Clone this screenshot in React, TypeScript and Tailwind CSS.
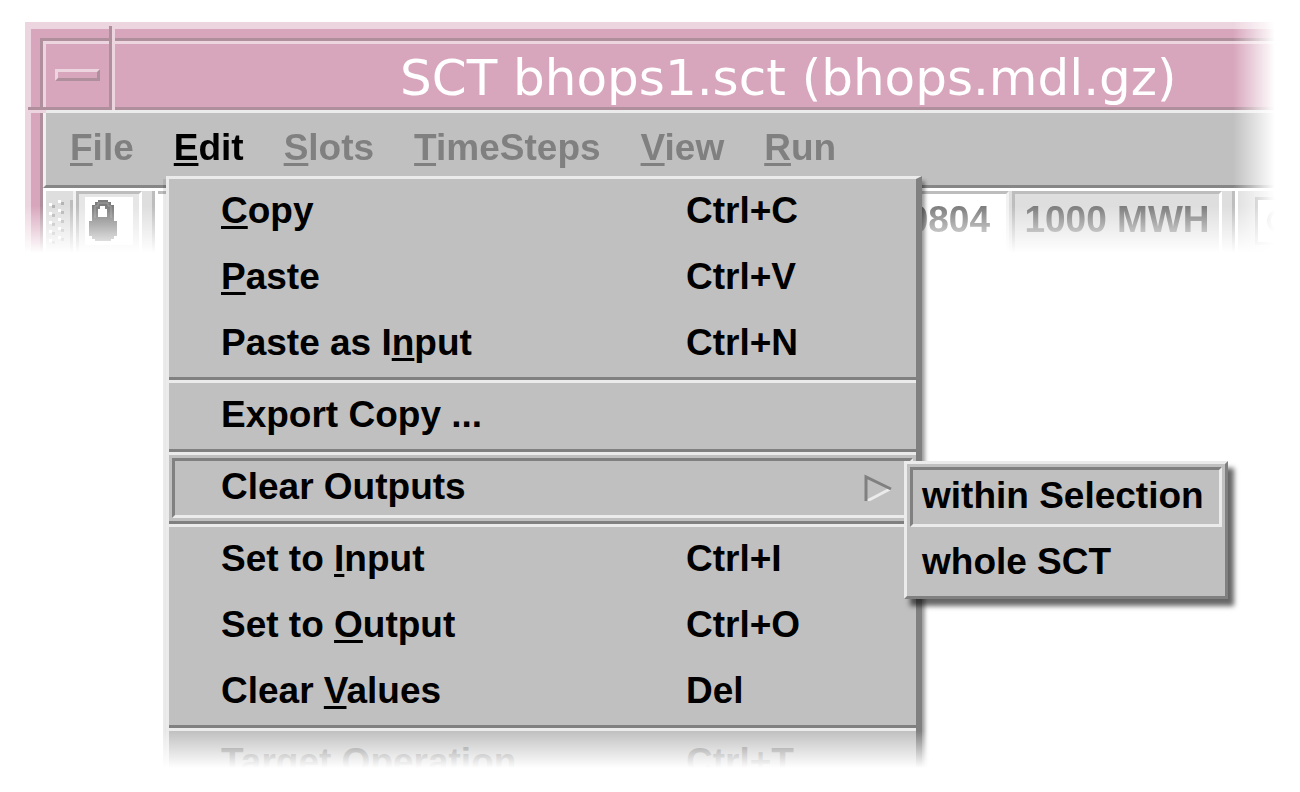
import clsx from "clsx";

type Item = {
  label: string;
  // position of the underlined letter
  mnemonic?: number;
  shortcut?: string;
};

const menus = [
  { label: "File", active: false },
  { label: "Edit", active: true },
  { label: "Slots", active: false },
  { label: "TimeSteps", active: false },
  { label: "View", active: false },
  { label: "Run", active: false },
];

const clipboardItems: Item[] = [
  { label: "Copy", mnemonic: 0, shortcut: "Ctrl+C" },
  { label: "Paste", mnemonic: 0, shortcut: "Ctrl+V" },
  { label: "Paste as Input", mnemonic: 10, shortcut: "Ctrl+N" },
];

const valueItems: Item[] = [
  { label: "Set to Input", mnemonic: 7, shortcut: "Ctrl+I" },
  { label: "Set to Output", mnemonic: 7, shortcut: "Ctrl+O" },
  { label: "Clear Values", mnemonic: 6, shortcut: "Del" },
];

function Label({ text, mnemonic }: { text: string; mnemonic?: number }) {
  if (mnemonic === undefined) return <span>{text}</span>;
  return (
    <span>
      {text.slice(0, mnemonic)}
      <span className="underline decoration-[3px] underline-offset-[3px] [text-decoration-skip-ink:none]">
        {text[mnemonic]}
      </span>
      {text.slice(mnemonic + 1)}
    </span>
  );
}

function MenuRow({ item }: { item: Item }) {
  return (
    <li role="none">
      <button
        type="button"
        role="menuitem"
        className="grid h-[66px] w-full grid-cols-[465px_1fr] items-center pb-[2px] pl-[52px] text-left whitespace-nowrap"
      >
        <Label text={item.label} mnemonic={item.mnemonic} />
        <span>{item.shortcut}</span>
      </button>
    </li>
  );
}

function Separator() {
  return (
    <li role="separator" className="h-[6px] border-t-3 border-b-3 border-t-[#808080] border-b-[#ebebeb]" />
  );
}

function Lock() {
  return (
    <svg viewBox="0 0 28 46" className="h-[46px] w-[28px]" aria-hidden="true">
      <path
        fillRule="evenodd"
        fill="#7c7c7c"
        d="M9 3H19V5H22V8H25V24H28V39H25V42H22V44H6V42H3V39H0V24H3V8H6V5H9ZM11 9V12H9V20H18V12H16V9Z"
      />
      <path d="M6 21V9H9V6H19V9H22V21" fill="none" stroke="#a0a0a0" strokeWidth="1" />
    </svg>
  );
}

function Grip() {
  const rows = [0, 9, 18, 27, 36];
  return (
    <svg viewBox="0 0 18 48" className="h-[48px] w-[18px]" aria-hidden="true">
      {rows.map((y) => (
        <g key={y}>
          <rect x="1" y={y + 3} width="3" height="3" fill="#fff" />
          <rect x="4" y={y + 5} width="3" height="3" fill="#b4b4b4" />
          <rect x="10" y={y} width="3" height="3" fill="#fff" />
          <rect x="13" y={y + 2} width="3" height="3" fill="#b4b4b4" />
        </g>
      ))}
    </svg>
  );
}

function TitleBar() {
  return (
    <div className="flex h-[69px] border-t-3 border-b-3 border-l-3 border-t-[#edd5df] border-b-[#b08f9c] border-l-[#edd5df]">
      <button
        type="button"
        aria-label="Window menu"
        className="flex w-[63px] shrink-0 items-center justify-center pb-[2px]"
      >
        <span className="h-3 w-[45px] border-3 border-t-[#edd5df] border-r-[#b08f9c] border-b-[#b08f9c] border-l-[#edd5df]" />
      </button>
      <h1 className="flex flex-1 items-center overflow-hidden pt-1 pl-[291px] font-['DejaVu_Sans',sans-serif] text-[50px] leading-none font-normal whitespace-nowrap text-white">
        SCT bhops1.sct (bhops.mdl.gz)
      </h1>
    </div>
  );
}

function MenuBar() {
  return (
    <nav className="flex h-[78px] items-center gap-10 border-t-3 border-b-3 border-l-3 border-t-[#ebebeb] border-b-[#868686] border-l-[#f0f0f0] bg-[#c0c0c0] pb-[2px] pl-6">
      {menus.map((menu) => (
        <button
          key={menu.label}
          type="button"
          className={clsx(menu.active ? "text-black" : "text-[#808080]")}
        >
          <Label text={menu.label} mnemonic={0} />
        </button>
      ))}
    </nav>
  );
}

function ToolBar() {
  return (
    <div className="flex h-[67px] border-t-3 border-l-3 border-white bg-[#dedede] text-[#7c7c7c]">
      <div className="flex w-[30px] shrink-0 border-r-3 border-white/60 pt-[9px] pl-[2px]">
        <Grip />
        <span className="ml-1 w-[3px] bg-[#bdbdbd]" />
      </div>
      <button
        type="button"
        aria-label="Lock"
        className="flex w-[66px] shrink-0 justify-center border-t-3 border-r-3 border-l-3 border-t-[#bdbdbd] border-r-white border-l-[#bdbdbd] bg-[#e6e6e6] pt-[3px]"
      >
        <span className="flex h-12 w-12 justify-center bg-white pr-3">
          <Lock />
        </span>
      </button>
      <span className="ml-[10px] w-[6px] shrink-0 border-r-3 border-l-3 border-r-white border-l-[#bdbdbd]" />
      <input
        aria-label="Slot value"
        readOnly
        value="0804"
        className="min-w-0 flex-1 border-t-3 border-r-3 border-t-[#bdbdbd] border-r-[#f2f2f2] bg-white pr-4 pb-[10px] text-right outline-none"
      />
      <button
        type="button"
        className="ml-[3px] w-[210px] shrink-0 border-t-3 border-r-3 border-l-3 border-t-[#bdbdbd] border-r-white border-l-[#bdbdbd] pb-[10px] whitespace-nowrap"
      >
        1000 MWH
      </button>
      <span className="ml-[10px] w-[6px] shrink-0 border-r-3 border-l-3 border-r-white border-l-[#bdbdbd]" />
      <button type="button" aria-label="Options" className="flex w-[39px] shrink-0 overflow-hidden pt-[6px] pl-[17px]">
        <span className="h-12 w-12 shrink-0 border-3 border-[#a8a8a8] bg-white">
          <svg viewBox="0 0 42 42" className="h-[42px] w-[42px]" aria-hidden="true">
            <circle cx="21" cy="21" r="10" fill="none" stroke="#a8a8a8" strokeWidth="4" />
          </svg>
        </span>
      </button>
    </div>
  );
}

function WindowFrame() {
  return (
    <div className="relative border-t-7 border-l-6 border-[#edd5df] bg-[#d8a6bc] pt-[9px] pl-[9px] mask-intersect [mask-image:linear-gradient(to_bottom,#000_184px,transparent_231px),linear-gradient(to_right,#000_calc(100%_-_44px),transparent_calc(100%_-_2px))]">
      <div className="border-t-3 border-l-3 border-[#b08f9c]">
        <TitleBar />
        <MenuBar />
        <ToolBar />
      </div>
      {/* grooves where the resize corners meet the frame */}
      <span className="absolute -top-[3px] left-[78px] h-[84px] w-[6px] border-r-3 border-l-3 border-r-[#edd5df] border-l-[#b08f9c]" />
      <span className="absolute top-[78px] -left-[3px] h-[6px] w-[18px] border-t-3 border-b-3 border-t-[#b08f9c] border-b-[#edd5df]" />
    </div>
  );
}

function ClearSubmenu() {
  return (
    <ul
      role="menu"
      aria-label="Clear Outputs"
      className="absolute top-[6px] left-[735px] z-10 w-[324px] border-3 border-t-[#ebebeb] border-r-[#808080] border-b-[#808080] border-l-[#ebebeb] bg-[#c0c0c0] shadow-[6px_7px_5px_rgba(0,0,0,0.6)]"
    >
      <li role="none" className="p-[3px]">
        <button
          type="button"
          role="menuitem"
          className="flex h-[60px] w-full items-center border-3 border-t-[#808080] border-r-[#ebebeb] border-b-[#ebebeb] border-l-[#808080] pb-[2px] pl-[9px] whitespace-nowrap"
        >
          within Selection
        </button>
      </li>
      <li role="none">
        <button
          type="button"
          role="menuitem"
          className="flex h-[66px] w-full items-center pb-[2px] pl-[15px] whitespace-nowrap"
        >
          whole SCT
        </button>
      </li>
    </ul>
  );
}

function EditMenu() {
  return (
    <div className="absolute top-[176px] left-[166px] w-[756px]">
      <ul
        role="menu"
        aria-label="Edit"
        className="border-t-3 border-r-6 border-l-3 border-t-[#ebebeb] border-r-[#808080] border-l-[#ebebeb] bg-[#c0c0c0] shadow-[-3px_3px_0_rgba(0,0,0,0.08),3px_5px_4px_rgba(0,0,0,0.4)]"
      >
        {clipboardItems.map((item) => (
          <MenuRow key={item.label} item={item} />
        ))}
        <Separator />
        <MenuRow item={{ label: "Export Copy ..." }} />
        <Separator />
        <li role="none" className="relative p-[3px]">
          <button
            type="button"
            role="menuitem"
            aria-haspopup="menu"
            className="flex h-[60px] w-full items-center justify-between border-3 border-t-[#808080] border-r-[#ebebeb] border-b-[#ebebeb] border-l-[#808080] pr-[18px] pb-[2px] pl-[46px]"
          >
            Clear Outputs
            <svg viewBox="0 0 28 28" className="h-7 w-7" aria-hidden="true">
              <path d="M3 28L26 16" fill="none" stroke="#ebebeb" strokeWidth="3" />
              <path d="M2 29V4L27 16" fill="none" stroke="#808080" strokeWidth="3" />
            </svg>
          </button>
          <ClearSubmenu />
        </li>
        <Separator />
        {valueItems.map((item) => (
          <MenuRow key={item.label} item={item} />
        ))}
        <Separator />
        <li role="none" className="text-[#808080]">
          <button
            type="button"
            role="menuitem"
            disabled
            className="grid h-[56px] w-full grid-cols-[465px_1fr] items-start pt-[10px] pl-[52px] text-left whitespace-nowrap"
          >
            <span>Target Operation</span>
            <span>Ctrl+T</span>
          </button>
        </li>
      </ul>
      {/* the menu fades out towards its lower edge */}
      <div className="pointer-events-none absolute -inset-x-3 -bottom-4 h-[72px] bg-[linear-gradient(to_bottom,transparent,#fff_37px)]" />
    </div>
  );
}

export default function App() {
  return (
    <main className="relative min-h-screen overflow-hidden bg-white pt-[22px] pr-[23px] pl-[25px] font-['Liberation_Sans',Arial,sans-serif] text-[37px] leading-[42px]">
      <div className="font-bold">
        <WindowFrame />
        <EditMenu />
      </div>
    </main>
  );
}
